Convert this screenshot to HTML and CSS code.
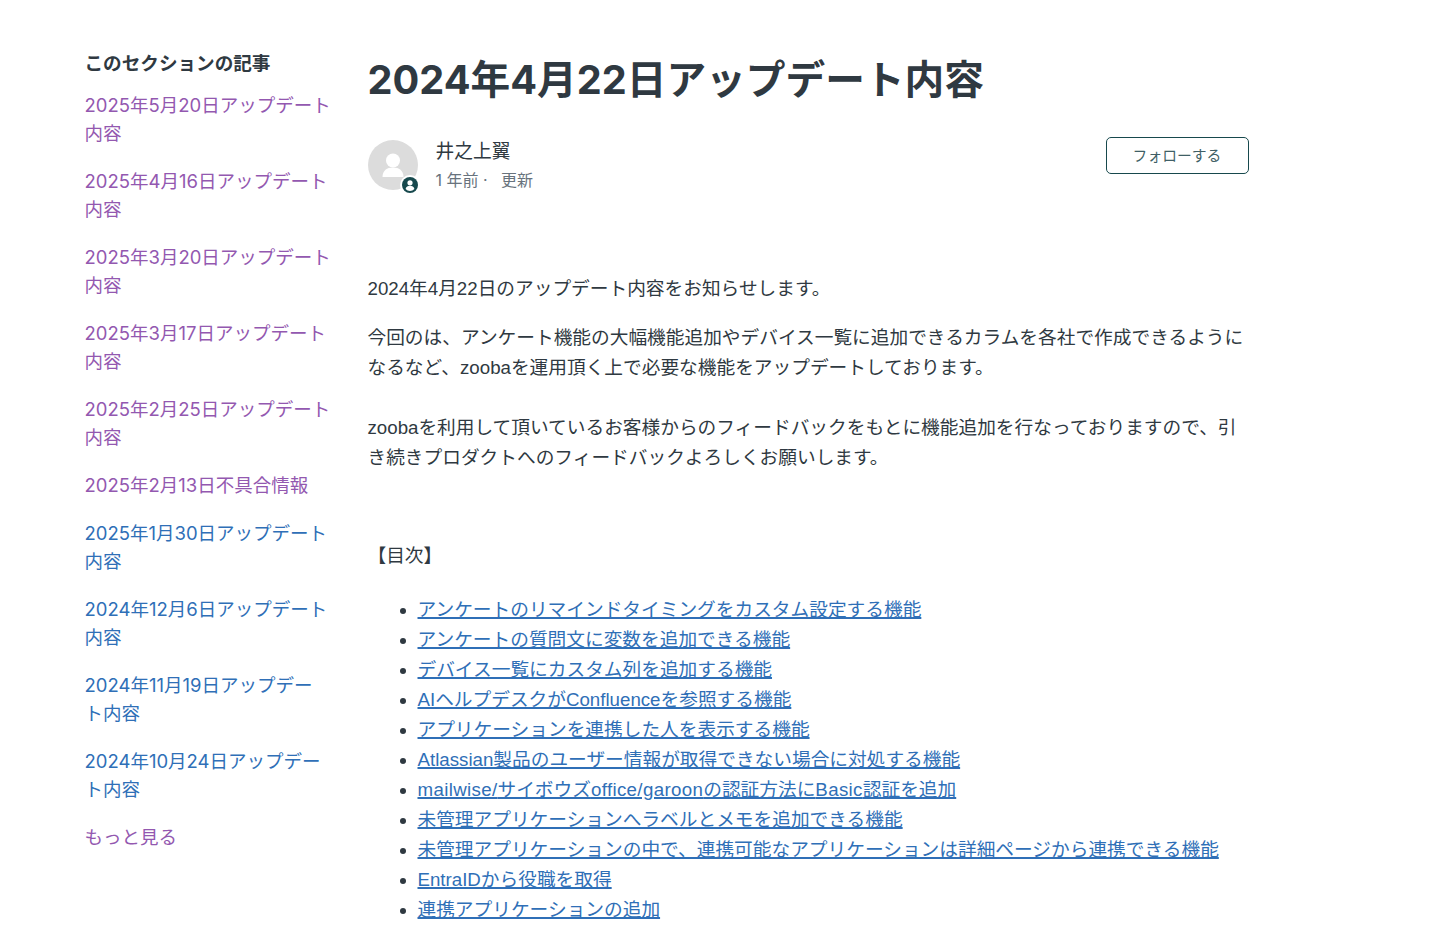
FILE: index.html
```html
<!DOCTYPE html>
<html lang="ja">
<head>
<meta charset="utf-8">
<title>2024年4月22日アップデート内容</title>
<link rel="stylesheet" href="styles.css">
</head>
<body>
<div class="layout">
  <aside class="sidebar">
    <h3 class="side-title">このセクションの記事</h3>
    <ul class="side-list">
      <li><a class="visited" href="#">2025年5月20日アップデート内容</a></li>
      <li><a class="visited" href="#">2025年4月16日アップデート内容</a></li>
      <li><a class="visited" href="#">2025年3月20日アップデート内容</a></li>
      <li><a class="visited" href="#">2025年3月17日アップデート内容</a></li>
      <li><a class="visited" href="#">2025年2月25日アップデート内容</a></li>
      <li><a class="visited" href="#">2025年2月13日不具合情報</a></li>
      <li><a class="fresh" href="#">2025年1月30日アップデート内容</a></li>
      <li><a class="fresh" href="#">2024年12月6日アップデート内容</a></li>
      <li><a class="fresh" href="#">2024年11月19日アップデー<br>ト内容</a></li>
      <li><a class="fresh" href="#">2024年10月24日アップデート内容</a></li>
      <li><a class="visited" href="#">もっと見る</a></li>
    </ul>
  </aside>
  <main class="article">
    <h1 class="title">2024年4月22日アップデート内容</h1>
    <div class="meta">
      <div class="avatar">
        <svg class="avatar-svg" viewBox="0 0 50 50" width="50" height="50">
          <circle cx="25" cy="25" r="25" fill="#dcdcdc"/>
          <circle cx="25" cy="20.500" r="7" fill="#fff"/>
          <path d="M14.500 37c0-6.500 4.500-9.500 10.500-9.500s10.500 3 10.500 9.500z" fill="#fff"/>
        </svg>
        <svg class="badge" viewBox="0 0 20 20" width="20" height="20">
          <circle cx="10" cy="10" r="10" fill="#fff"/>
          <circle cx="10" cy="10" r="8" fill="#17494d"/>
          <circle cx="10" cy="7.800" r="2.600" fill="#fff"/>
          <path d="M5.600 14c.4-2.300 2.300-3.300 4.400-3.300s4 1 4.400 3.300a6 6 0 0 1-8.800 0z" fill="#fff"/>
        </svg>
      </div>
      <div class="meta-text">
        <div class="author">井之上翼</div>
        <div class="dates">1 年前 ·&nbsp;&nbsp;&nbsp;更新</div>
      </div>
      <button class="follow">フォローする</button>
    </div>
    <div class="body">
      <p>2024年4月22日のアップデート内容をお知らせします。</p>
      <p class="lead">今回のは、アンケート機能の大幅機能追加やデバイス一覧に追加できるカラムを各社で作成できるようになるなど、zoobaを運用頂く上で必要な機能をアップデートしております。</p>
      <p class="lead spaced">zoobaを利用して頂いているお客様からのフィードバックをもとに機能追加を行なっておりますので、引き続きプロダクトへのフィードバックよろしくお願いします。</p>
      <p class="toc-head">【目次】</p>
      <ul class="toc">
        <li><a href="#">アンケートのリマインドタイミングをカスタム設定する機能</a></li>
        <li><a href="#">アンケートの質問文に変数を追加できる機能</a></li>
        <li><a href="#">デバイス一覧にカスタム列を追加する機能</a></li>
        <li><a href="#">AIヘルプデスクがConfluenceを参照する機能</a></li>
        <li><a href="#">アプリケーションを連携した人を表示する機能</a></li>
        <li><a href="#">Atlassian製品のユーザー情報が取得できない場合に対処する機能</a></li>
        <li><a href="#"><span class="latin">mailwise/</span>サイボウズ<span class="latin">office/garoon</span>の認証方法に<span class="latin">Basic</span>認証を追加</a></li>
        <li><a href="#">未管理アプリケーションへラベルとメモを追加できる機能</a></li>
        <li><a href="#">未管理アプリケーションの中で、連携可能なアプリケーションは詳細ページから連携できる機能</a></li>
        <li><a href="#">EntraIDから役職を取得</a></li>
        <li><a href="#">連携アプリケーションの追加</a></li>
      </ul>
    </div>
  </main>
</div>
</body>
</html>
```
FILE: styles.css
```css
* { box-sizing: border-box; }
html, body { margin: 0; padding: 0; height: 925px; overflow: hidden; background: #fff; }
body {
  font-family: Inter, "Noto Sans CJK JP", sans-serif;
  color: #2f3941;
  font-size: 18.75px;
}
a { text-decoration: none; }
.layout {
  display: flex;
  padding: 0 0 0 84.5px;
}
.sidebar { width: 245px; padding-top: 49px; flex: none; font-size: 18.5px; }
.side-title { margin: 0 0 14px; font-size: 18.6px; line-height: 28px; font-weight: 600; color: #2f3941; }
.side-list { list-style: none; margin: 0 -2px 0 0; padding: 0; }
.side-list li { line-height: 28px; margin-bottom: 20px; }
.visited { color: #9358b0; }
.fresh { color: #2f6fb7; }
.article { width: 881px; margin-left: 38px; flex: none; }
.title { margin: 52px 0 0; font-size: 39.7px; line-height: 56px; font-weight: 700; color: #2f3941; }
.meta { display: flex; align-items: flex-start; margin-top: 30px; }
.avatar { position: relative; width: 50px; height: 50px; margin-top: 2px; flex: none; }
.avatar-svg { display: block; }
.badge { position: absolute; right: -2px; bottom: -5px; }
.meta-text { margin-left: 18px; flex: 1; }
.author { line-height: 28px; }
.dates { font-size: 16px; line-height: 28px; color: #68737d; }
.follow {
  width: 143px; height: 37px;
  background: #fff;
  border: 1.5px solid #17494d;
  border-radius: 5px;
  color: #3f5f66;
  font: 14.8px Inter, "Noto Sans CJK JP", sans-serif;
  margin: -1px 0 0;
  padding: 0 0 2px;
}
.body { margin-top: 80px; line-height: 30px; font-family: "Liberation Sans", "Noto Sans CJK JP", sans-serif; font-size: 18.7px; }
.body p { margin: 0; }
.lead { margin-top: 19px !important; }
.spaced { margin-top: 30px !important; }
.toc-head { margin-top: 68px !important; }
.toc { margin: 24px 0 0; padding: 0 0 0 50px; list-style: disc; }
.toc a { color: #2f6fb7; text-decoration: underline; text-decoration-thickness: 1.5px; }
.latin { letter-spacing: 0.35px; }
```
